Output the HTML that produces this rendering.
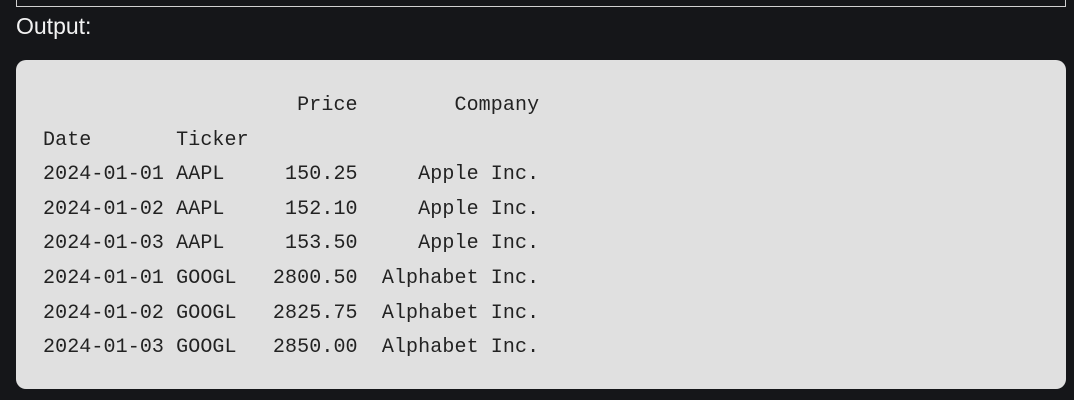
<!DOCTYPE html>
<html><head><style>
html,body{margin:0;padding:0;background:#151619;width:1074px;height:400px;overflow:hidden}
.top{position:absolute;left:16px;top:-10px;width:1048px;height:15px;border:1px solid #d0d0d0}
.lbl{position:absolute;left:16px;top:13px;font:23px "Liberation Sans",sans-serif;color:#f2f2f2}
.panel{position:absolute;left:16px;top:60px;width:1050px;height:329px;background:#e0e0e0;border-radius:10px}
pre{position:absolute;left:27px;top:29px;margin:0;font:20px/34.6px "Liberation Mono",monospace;color:#222;letter-spacing:0.1px}
</style></head><body>
<div class="top"></div>
<div class="lbl">Output:</div>
<div class="panel"><pre>                     Price        Company
Date       Ticker
2024-01-01 AAPL     150.25     Apple Inc.
2024-01-02 AAPL     152.10     Apple Inc.
2024-01-03 AAPL     153.50     Apple Inc.
2024-01-01 GOOGL   2800.50  Alphabet Inc.
2024-01-02 GOOGL   2825.75  Alphabet Inc.
2024-01-03 GOOGL   2850.00  Alphabet Inc.</pre></div>
</body></html>
